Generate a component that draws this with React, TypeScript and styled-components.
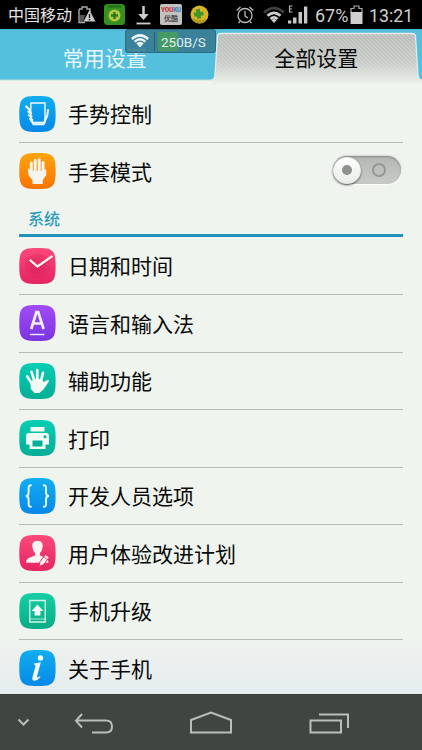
import React from 'react';
import styled, { createGlobalStyle } from 'styled-components';

const GlobalStyle = createGlobalStyle`
  * { box-sizing: border-box; }
  html, body { margin: 0; padding: 0; }
  body { font-family: Roboto, "Noto Sans CJK SC", sans-serif; overflow: hidden; }
  svg { display: block; flex: none; overflow: visible; }
`;

const Screen = styled.div`
  position: relative;
  display: flex;
  flex-direction: column;
  width: 422px;
  height: 750px;
  overflow: hidden;
  background: #eff4ee;
`;

const StatusBar = styled.header`
  display: flex;
  align-items: center;
  height: 29px;
  flex: none;
  padding-left: 8px;
  background: #000;
  color: #cfcfcf;
`;

const Carrier = styled.span`
  width: 70px;
  font: 16px/29px "Noto Sans CJK SC", sans-serif;
  color: #e4e4e4;
  white-space: nowrap;
`;

const StatusSlot = styled.span<{ $width: number }>`
  flex: none;
  width: ${(p) => p.$width}px;
`;

const StatusText = styled.span<{ $width: number; $size: number }>`
  flex: none;
  width: ${(p) => p.$width}px;
  font-size: ${(p) => p.$size}px;
  line-height: 30px;
  padding-top: 2px;
  white-space: nowrap;
`;

const TabBar = styled.nav`
  display: flex;
  height: 56px;
  flex: none;
  padding-right: 2px;
  background: linear-gradient(#48aecb 0, #55bfde 2px, #55bfde 50px, #b8e0e6 51px, #f4f3ea 52px, #eff4ee 56px);
`;

const Tab = styled.div<{ $active?: boolean }>`
  position: relative;
  display: flex;
  justify-content: center;
  width: ${(p) => (p.$active ? 208 : 210)}px;
  margin-left: ${(p) => (p.$active ? 3 : 0)}px;
  font: 21px/56px "Noto Sans CJK SC", sans-serif;
  color: ${(p) => (p.$active ? '#080908' : '#e6f7fb')};
`;

const TabShape = styled.svg`
  position: absolute;
  left: 0;
  top: 0;
`;

const TabLabel = styled.span`
  position: relative;
`;

const Traffic = styled.div`
  position: absolute;
  left: 125px;
  top: 29px;
  display: flex;
  align-items: center;
  width: 91px;
  height: 24px;
  padding: 0 3px 0 5px;
  border: 1px solid #2c6c80;
  border-radius: 3px;
  background: rgba(52, 120, 142, 0.86);
`;

const Rate = styled.span`
  flex: 1;
  height: 19px;
  margin-left: 5px;
  padding-left: 6px;
  border-left: 1px solid #265c6d;
  background: linear-gradient(90deg, transparent 3px, #459965 3px, #459965 23px, transparent 23px);
  color: #e3eef0;
  font-size: 13.5px;
  line-height: 20px;
  white-space: nowrap;
`;

const List = styled.main`
  flex: 1;
  min-height: 0;
  padding: 0 19px;
  overflow: hidden;
  background: linear-gradient(#eff4ee 0, #eff4ee 550px, #edf0ef 570px, #e5edee 609px);
`;

const Row = styled.div<{ $height?: number; $plain?: boolean }>`
  display: flex;
  align-items: center;
  height: ${(p) => p.$height || 57.5}px;
  border-bottom: 1px solid ${(p) => (p.$plain ? 'transparent' : '#b8bbb8')};
`;

const RowLabel = styled.span`
  flex: 1;
  margin-left: 12px;
  font: 21px/32px "Noto Sans CJK SC", sans-serif;
  color: #080908;
  padding-bottom: 1px;
`;

const SectionTitle = styled.h2`
  height: 37px;
  margin: 0 0 0.5px;
  padding-left: 9px;
  border-bottom: 3px solid #1f93b9;
  font: 500 16px/37px "Noto Sans CJK SC", sans-serif;
  color: #2b9cbd;
`;

const Switch = styled.div`
  display: flex;
  align-items: center;
  justify-content: space-between;
  width: 68px;
  height: 28px;
  margin: -2px 2px 0 0;
  padding-right: 15px;
  border-radius: 14px;
  background: linear-gradient(#b3b6b3, #c8cbc8);
  box-shadow: inset 0 1px 2px #858985, 0 1px 1px #fff, 0 -1px 2px #d4d8d3;
`;

const Thumb = styled.span`
  display: flex;
  align-items: center;
  justify-content: center;
  width: 28px;
  height: 27px;
  border-radius: 50%;
  background: linear-gradient(#fff, #e8ece8);
  box-shadow: 0 1px 2px #444, inset 0 0 1px #8a8f8a;
  &::after {
    content: '';
    width: 10px;
    height: 10px;
    border-radius: 50%;
    background: #8e918e;
  }
`;

const OffRing = styled.span`
  width: 14px;
  height: 14px;
  border: 2px solid #949894;
  border-radius: 50%;
`;

const NavBar = styled.footer`
  display: flex;
  align-items: center;
  height: 56px;
  flex: none;
  background: #414541;
  border-top: 1px solid #383c38;
`;

const palette: Record<string, [string, string]> = {
  blue: ['#12aef0', '#0788e8'],
  orange: ['#ffa40c', '#f77403'],
  pink: ['#fb4a7a', '#e52462'],
  purple: ['#a14bf6', '#7a35e0'],
  teal: ['#06ceb4', '#06ad96'],
  green: ['#16cfa6', '#0bac84'],
};

function Tile({ tone, id, children }: { tone: string; id: string; children: React.ReactNode }) {
  const [top, bottom] = palette[tone];
  return (
    <svg width="37" height="36" viewBox="0 0 37 36">
      <defs>
        <linearGradient id={id} x1="0" y1="0" x2="0" y2="1">
          <stop offset="0" stopColor={top} />
          <stop offset="1" stopColor={bottom} />
        </linearGradient>
      </defs>
      <path
        fill={`url(#${id})`}
        d="M18.500 0C24 0 27.500 .2 29.800 1C33 2 34.700 4 35.600 7C36.400 10 36.600 13 36.600 18S36.400 26 35.600 29C34.700 32 33 34 29.800 35C27.500 35.800 24 36 18.500 36S9.500 35.800 7.200 35C4 34 2.200 32 1.300 29C.5 26 .3 23 .3 18S.5 10 1.300 7C2.200 4 4 2 7.200 1C9.500 .2 13 0 18.500 0Z"
      />
      {children}
    </svg>
  );
}

const glyphs: Record<string, React.ReactNode> = {
  gesture: (
    <g fill="none" stroke="#f4fafc" strokeLinecap="round" strokeLinejoin="round">
      <path d="M11.800 25V7H26V26.500H14" strokeWidth="1.400" />
      <path d="M7.200 10.500 10.800 14M9.300 15.800 12 17.300M9.800 19.300 12.500 20.500M11 22.800 13.200 23.800" strokeWidth="2.200" />
      <path d="M29 14 28.300 19.500 26.500 23.500M24.500 28.300H14.500L13 25.500M26.500 23.500 24.500 28.300" strokeWidth="2" />
    </g>
  ),
  glove: (
    <g stroke="#f4f5ee" strokeLinecap="round" fill="#f4f5ee">
      <path d="M12.300 10V20M16.200 7.200V19M20.200 6.800V19M24 9.500V19" strokeWidth="3" />
      <path d="M10.800 18H25.500V24L23.800 27V31H13.500V27L10.800 23Z" stroke="none" />
      <path d="M9.700 16.500 10.500 22 13 25M26.300 17V22L24 25" strokeWidth="1.800" />
    </g>
  ),
  clock: (
    <g>
      <circle cx="18.500" cy="18" r="12.500" fill="#d81f58" opacity=".28" />
      <circle cx="18.500" cy="18" r="8.500" fill="#d81f58" opacity=".25" />
      <path d="M10.500 13 18.500 20 33.500 9.500" fill="none" stroke="#bd1648" strokeWidth="2" opacity=".4" />
      <path d="M10.800 11.800 18.500 18.500 33.500 8" fill="none" stroke="#fff4f4" strokeWidth="2.300" />
    </g>
  ),
  letter: (
    <g fill="none" stroke="#f4f0fb">
      <path d="M12.200 24 17.400 7.200H19.200L24.600 24M14 18.500H23" strokeWidth="2.700" />
      <path d="M11 29.500H25.500" strokeWidth="1.400" />
    </g>
  ),
  palm: (
    <g fill="#f2faf4" stroke="#f2faf4" strokeLinecap="round" strokeLinejoin="round">
      <path d="M8.200 13.500 13 21M12.500 8.800 15.700 19M18.200 7 18.400 18M24 9.800 21.700 19" strokeWidth="2.700" />
      <path d="M12.500 19 17 16.500 22.500 17.500 24 20.500 29 18 24 25.500 20 29H16L12.800 25.500Z" strokeWidth="2" />
    </g>
  ),
  printer: (
    <g>
      <path fill="#f2faf4" d="M11.500 7H25.500V11.500H11.500ZM10 13H27Q30 13 30 16V24.500H26.500V29H10.500V24.500H7V16Q7 13 10 13Z" />
      <path fill="#05b09b" d="M13.500 20.500H23.500V26.500H13.500Z" />
      <circle cx="26" cy="16.800" r="1.500" fill="#07b59f" />
    </g>
  ),
  braces: (
    <g fill="none" stroke="#eefaff" strokeWidth="1.900">
      <path d="M12.600 7.200C9.500 7.200 9.600 8.500 9.600 11V14.500Q9.600 18 6.800 18Q9.600 18 9.600 21.500V25C9.600 27.500 9.500 28.800 12.600 28.800" />
      <path d="M24 7.200C27.100 7.200 27 8.500 27 11V14.500Q27 18 30 18Q27 18 27 21.500V25C27 27.500 27.100 28.800 24 28.800" />
    </g>
  ),
  person: (
    <g>
      <path
        fill="#fff2f3"
        d="M18.500 5.800C22.600 5.800 24.200 8.700 23.600 12.200Q23 16.200 21 18V20.500L27 23Q29.500 24.500 29.500 27.700H7Q7 24.400 9.500 23L16 20.500V18Q14 16.200 13.400 12.200C12.800 8.700 14.400 5.800 18.500 5.800Z"
      />
      <path d="M20 31.500 21 26.600 26.500 19.500 30.300 22.200 24.700 29.500Z" fill="#fff2f3" stroke="#e92c66" strokeWidth="1" />
      <path d="M24.800 22 28.500 24.700" stroke="#e92c66" strokeWidth=".8" />
    </g>
  ),
  upgrade: (
    <g>
      <path d="M10.800 7.500H26.200V29H10.800Z" fill="none" stroke="#d6f6e9" strokeWidth="1.300" />
      <path d="M11 26H26" stroke="#d6f6e9" strokeWidth=".8" />
      <path d="M18.500 11.500 24.300 18H21.400V22.500H15.600V18H12.700Z" fill="#f7fffb" />
    </g>
  ),
  info: (
    <g fill="#f5fcff">
      <circle cx="21.500" cy="8" r="2.700" />
      <path d="M15 13.500Q18.500 13.300 21.800 12.300L18 26.500Q17.700 28.500 21 26.300L21.500 27Q18.500 30.700 15.500 30.700Q12.500 30.700 13.500 27L16.400 16.500Q16.800 14.600 15 14.600Z" />
    </g>
  ),
};

function SettingRow({ icon, tone, label, height, plain, children }: {
  icon: string;
  tone: string;
  label: string;
  height?: number;
  plain?: boolean;
  children?: React.ReactNode;
}) {
  return (
    <Row $height={height} $plain={plain}>
      <Tile tone={tone} id={`tile-${icon}`}>{glyphs[icon]}</Tile>
      <RowLabel>{label}</RowLabel>
      {children}
    </Row>
  );
}

const systemRows = [
  { icon: 'clock', tone: 'pink', label: '日期和时间' },
  { icon: 'letter', tone: 'purple', label: '语言和输入法' },
  { icon: 'palm', tone: 'teal', label: '辅助功能' },
  { icon: 'printer', tone: 'teal', label: '打印' },
  { icon: 'braces', tone: 'blue', label: '开发人员选项' },
  { icon: 'person', tone: 'pink', label: '用户体验改进计划' },
  { icon: 'upgrade', tone: 'green', label: '手机升级' },
  { icon: 'info', tone: 'blue', label: '关于手机', plain: true },
];

const YoukuBadge = styled.span`
  display: flex;
  flex-direction: column;
  align-items: center;
  justify-content: center;
  width: 22px;
  height: 21px;
  border-radius: 2px;
  background: #c2c2c0;
  color: #4c4c4c;
  font: 700 7px/8px "Noto Sans CJK SC", sans-serif;
`;

const YoukuName = styled.span`
  font: 900 6.5px/7px Roboto, sans-serif;
  letter-spacing: -0.3px;
  color: #c8373b;
  b { color: #3c86b4; }
`;

function Wifi({ width, height, dim }: { width: number; height: number; dim?: boolean }) {
  const lit = dim ? '#cfcfcf' : '#eef5f6';
  return (
    <svg width={width} height={height} viewBox="0 0 22 16" fill="none" strokeWidth={dim ? 2.7 : 3}>
      <path d="M1 5.500Q11-3.200 21 5.500" stroke={dim ? '#414141' : lit} />
      <path d="M4.500 8.800Q11 3 17.500 8.800" stroke={lit} />
      <path d="M7.500 12Q11 8.800 14.500 12" stroke={lit} />
      <path d="M8.300 13 11 16 13.700 13Q11 11 8.300 13Z" fill={lit} />
    </svg>
  );
}

export default function App() {
  return (
    <Screen>
      <GlobalStyle />
      <StatusBar>
        <Carrier>中国移动</Carrier>
        <StatusSlot $width={26}>
          <svg width="18" height="18" viewBox="0 0 18 18">
            <path d="M1 3H4V1H9V3H12V6M1 3V16.500H7" fill="none" stroke="#a8a8a8" strokeWidth="1.400" />
            <path d="M2 9H7L5 16H2Z" fill="#555" />
            <path d="M11.500 4 17.500 15.500H5.500Z" fill="#c9c9c9" />
            <path d="M11.500 8V12M11.500 13V14.500" stroke="#222" strokeWidth="1.400" />
          </svg>
        </StatusSlot>
        <StatusSlot $width={32}>
          <svg width="21" height="21" viewBox="0 0 21 21">
            <rect width="21" height="21" rx="3.500" fill="#35911f" />
            <path d="M4 2.500H17" stroke="#236d17" strokeWidth="2" />
            <circle cx="10.500" cy="11.500" r="6" fill="#b4c640" />
            <path d="M10.500 8V15M7 11.500H14" stroke="#287820" strokeWidth="2.300" />
          </svg>
        </StatusSlot>
        <StatusSlot $width={24}>
          <svg width="15" height="20" viewBox="0 0 15 20">
            <path d="M7.500 1V11" stroke="#cfcfcf" strokeWidth="2.500" />
            <path d="M2.300 9H12.700L7.500 15Z" fill="#cfcfcf" />
            <path d="M.5 18.500H14.500" stroke="#cfcfcf" strokeWidth="1.800" />
          </svg>
        </StatusSlot>
        <StatusSlot $width={30}>
          <YoukuBadge>
            <YoukuName>YOU<b>KU</b></YoukuName>
            优酷
          </YoukuBadge>
        </StatusSlot>
        <StatusSlot $width={46}>
          <svg width="19" height="19" viewBox="0 0 19 19">
            <circle cx="9.500" cy="9.500" r="9" fill="#d8b428" />
            <path d="M1 12.500A9 9 0 0 0 17.500 13.500Q9 17 1 12.500Z" fill="#b09a1c" />
            <path d="M8.500 4V13.500M4 9H13.500" stroke="#3f9628" strokeWidth="4" transform="rotate(-8 9 9)" />
          </svg>
        </StatusSlot>
        <StatusSlot $width={27}>
          <svg width="18" height="18" viewBox="0 0 18 18" fill="none" stroke="#bcbcbc" strokeWidth="1.300">
            <circle cx="9" cy="9.500" r="7" />
            <path d="M9 5V10L12 12M.7 4.500 4.500 1M17.300 4.500 13.500 1M4 15.500 2.500 17M14 15.500 15.500 17" />
          </svg>
        </StatusSlot>
        <StatusSlot $width={25}><Wifi width={22} height={16} dim /></StatusSlot>
        <StatusSlot $width={27}>
          <svg width="21" height="19" viewBox="0 0 21 19">
            <path d="M4.500 1H1.500V7H4.500M1.500 4H4" stroke="#b8b8b8" strokeWidth="1.100" fill="none" />
            <path d="M0 15.500H3.300V18.500H0ZM5 12.500H8.500V18.500H5ZM10.500 7H14V18.500H10.500ZM16 1.500H19.300V18.500H16Z" fill="#c8c8c8" />
          </svg>
        </StatusSlot>
        <StatusText $width={35} $size={18}>67%</StatusText>
        <StatusSlot $width={19}>
          <svg width="13" height="20" viewBox="0 0 13 20">
            <path d="M1 8V3.500H4V1H9V3.500H12V8" fill="none" stroke="#a8a8a8" strokeWidth="1.200" />
            <path d="M.5 7H12.500V19H.5Z" fill="#cfcfcf" />
          </svg>
        </StatusSlot>
        <StatusText $width={46} $size={17.8}>13:21</StatusText>
      </StatusBar>
      <TabBar>
        <Tab><TabLabel>常用设置</TabLabel></Tab>
        <Tab $active>
          <TabShape width="208" height="56" viewBox="0 0 208 56">
            <defs>
              <linearGradient id="tab-fill" x1="0" y1="0" x2="0" y2="1">
                <stop offset="0" stopColor="#babdba" />
                <stop offset=".55" stopColor="#c8cbc7" />
                <stop offset=".82" stopColor="#dde1dc" />
                <stop offset="1" stopColor="#eff4ee" />
              </linearGradient>
              <pattern id="tab-hatch" width="4" height="4" patternUnits="userSpaceOnUse">
                <path d="M-1 -1 5 5M-1 3 1 5M3 -1 5 1" stroke="#eef1ed" strokeWidth="1" opacity=".26" />
              </pattern>
            </defs>
            <path d="M-2 56V51Q1.500 51 2 46L4.500 7Q5 4 8 4H199Q202 4 202.500 7L205 46Q205.500 51 209 51V56Z" fill="url(#tab-fill)" />
            <path d="M1.500 50 4.500 7Q5 4 8 4H199Q202 4 202.500 7L205.500 50Z" fill="url(#tab-hatch)" />
            <path d="M-2 51Q1.500 51 2 46L4.500 7Q5 4.500 8 4.500H199Q202 4.500 202.500 7L205 46Q205.500 51 209 51" fill="none" stroke="#e4ebe8" strokeWidth="1.300" />
          </TabShape>
          <TabLabel>全部设置</TabLabel>
        </Tab>
      </TabBar>
      <List>
        <SettingRow icon="gesture" tone="blue" label="手势控制" height={58} />
        <SettingRow icon="glove" tone="orange" label="手套模式" height={57} plain>
          <Switch><Thumb /><OffRing /></Switch>
        </SettingRow>
        <SectionTitle>系统</SectionTitle>
        {systemRows.map((row) => <SettingRow key={row.icon} {...row} />)}
      </List>
      <NavBar>
        <svg width="422" height="55" viewBox="0 0 422 55" fill="none" stroke="#b9beb9" strokeWidth="2">
          <path d="M18.500 24.500 23.500 29.500 28.500 24.500" />
          <path d="M82 19 76 25.800 82 32.500M76 25.500H106Q112 25.500 112 31.500T106 37.500H92" />
          <path d="M191 37.500V25L211 17.500 231 25V37.500Z" />
          <path d="M310.500 25.500H341V37.500H310.500ZM319 19.500H348V33" />
        </svg>
      </NavBar>
      <Traffic>
        <Wifi width={18} height={14} />
        <Rate>250B/S</Rate>
      </Traffic>
    </Screen>
  );
}
